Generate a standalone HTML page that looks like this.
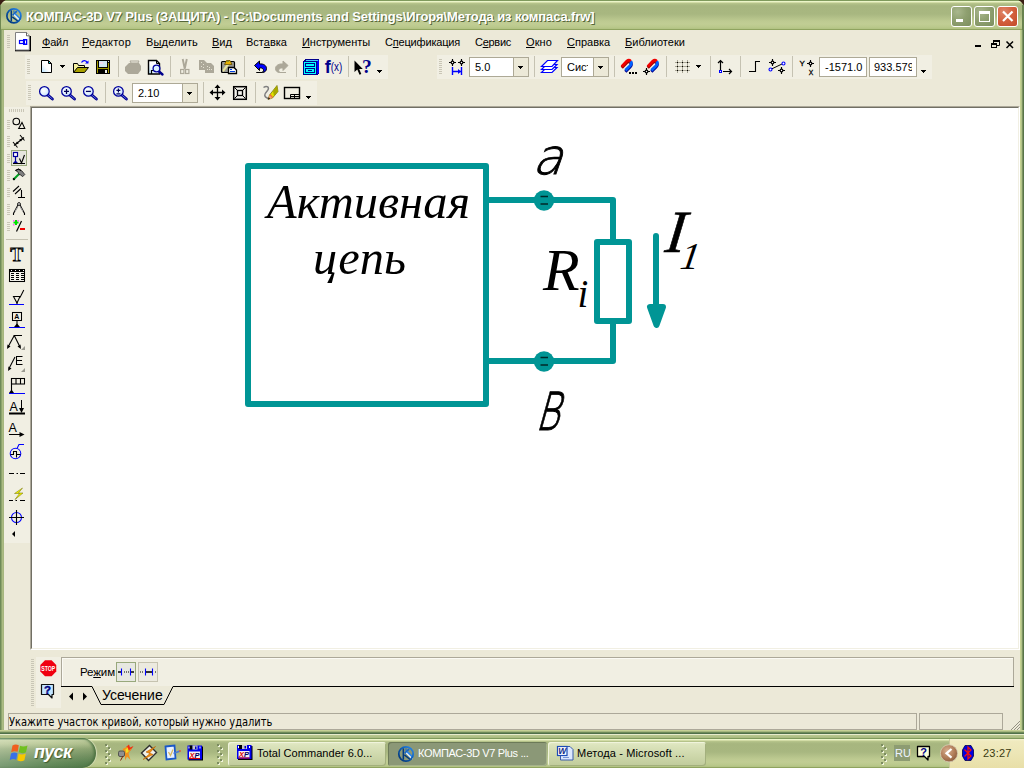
<!DOCTYPE html>
<html lang="ru">
<head>
<meta charset="utf-8">
<title>КОМПАС-3D V7 Plus</title>
<style>
*{box-sizing:border-box;margin:0;padding:0}
html,body{width:1024px;height:768px;overflow:hidden;background:#ECE9D8}
body{position:relative;font-family:"Liberation Sans",sans-serif;font-size:11px;color:#000}
.a{position:absolute}
.t{position:absolute;white-space:nowrap;line-height:1}
.band{position:absolute;background:#F1EFE3}
.grip{position:absolute;width:3px;background:repeating-linear-gradient(to bottom,#C9C6B6 0,#C9C6B6 1px,transparent 1px,transparent 2px)}
.menu u{text-decoration:underline;text-underline-offset:1px}
svg{position:absolute;overflow:visible}
.combo{position:absolute;height:20px;background:#fff;border:1px solid #ADA996;overflow:hidden}
.combo b{position:absolute;right:0;top:0;bottom:0;width:15px;background:#ECE9D8;border-left:1px solid #ADA996}
.combo span{position:absolute;left:5px;top:4px;white-space:nowrap;line-height:1;font-size:11px}
.tb{position:absolute;top:742px;height:24px;border-radius:3px;font-size:11px}
.tb span{position:absolute;top:6px;white-space:nowrap;line-height:1}
</style>
</head>
<body>
<div id="titlebar" class="a" style="left:0;top:0;width:1024px;height:30px;background:linear-gradient(to bottom,#7F9A5C 0,#7F9A5C 1px,#EBF5C8 1px,#EBF5C8 2px,#D2DCA6 2px,#D2DCA6 3px,#B9C68D 3px,#AAB982 5px,#A7B67F 6px,#A8B780 14px,#BDCA91 21px,#C1CD94 24px,#BAC98C 27px,#B3C384 28.5px,#8FA35F 29.2px,#8FA35F 30px)"></div>
<div class="a" style="left:0;top:30px;width:4px;height:704px;background:linear-gradient(to right,#6F8A58 0,#6F8A58 1px,#8DA46D 1px,#8DA46D 2px,#ABBB83 2px,#ABBB83 3px,#A6B67F 3px,#A6B67F 4px)"></div>
<div class="a" style="left:1020px;top:30px;width:4px;height:704px;background:linear-gradient(to right,#C5D392 0,#C5D392 1px,#B4C38A 1px,#B4C38A 2px,#7C9460 2px,#7C9460 3px,#58744A 3px,#58744A 4px)"></div>
<div class="a" style="left:0;top:730px;width:1024px;height:4px;background:linear-gradient(to bottom,#C5D095 0,#C5D095 1px,#A5B67E 1px,#A5B67E 2px,#6E8A58 2px,#6E8A58 3px,#50704A 3px,#50704A 4px)"></div>
<svg class="a" style="left:0;top:0" width="1024" height="6" viewBox="0 0 1024 6"><path d="M0 0H5.6Q2 1.8 0 5.6Z" fill="#3A1E14"/><path d="M1024 0H1018.4Q1022 1.8 1024 5.6Z" fill="#3A1E14"/></svg>
<div class="a" style="left:0;top:5px;width:1px;height:25px;background:#708852"></div><div class="a" style="left:1022px;top:5px;width:2px;height:25px;background:#68824F"></div>
<div id="ttl" class="t" style="left:26px;top:10px;font-size:13px;font-weight:bold;color:#fff;text-shadow:1px 1px 0 #55663A;letter-spacing:-0.11px">КОМПАС-3D V7 Plus (ЗАЩИТА) - [C:\Documents and Settings\Игоря\Метода из компаса.frw]</div>
<div class="a" style="left:951px;top:6px;width:21px;height:21px;border:1px solid #fff;border-radius:3px;background:radial-gradient(circle at 30% 25%,#A9B78D 0,#8FA070 45%,#7C8E5E 100%)"></div><div class="a" style="left:974px;top:6px;width:21px;height:21px;border:1px solid #fff;border-radius:3px;background:radial-gradient(circle at 30% 25%,#A9B78D 0,#8FA070 45%,#7C8E5E 100%)"></div><div class="a" style="left:997px;top:6px;width:21px;height:21px;border:1px solid #fff;border-radius:3px;background:radial-gradient(circle at 30% 25%,#E0866A 0,#D4623F 45%,#C24A28 100%)"></div>
<div class="grip" style="left:7px;top:35px;height:13px"></div>
<div class="menu">
<span class="t" style="left:42px;top:37px;letter-spacing:-0.25px"><u>Ф</u>айл</span>
<span class="t" style="left:82px;top:37px;letter-spacing:0.2px"><u>Р</u>едактор</span>
<span class="t" style="left:146px;top:37px;letter-spacing:0.15px">В<u>ы</u>делить</span>
<span class="t" style="left:212px;top:37px"><u>В</u>ид</span>
<span class="t" style="left:246px;top:37px">Вст<u>а</u>вка</span>
<span class="t" style="left:302px;top:37px;letter-spacing:-0.05px"><u>И</u>нструменты</span>
<span class="t" style="left:385px;top:37px;letter-spacing:-0.18px">С<u>п</u>ецификация</span>
<span class="t" style="left:475px;top:37px;letter-spacing:-0.28px">С<u>е</u>рвис</span>
<span class="t" style="left:526px;top:37px;letter-spacing:0.1px"><u>О</u>кно</span>
<span class="t" style="left:567px;top:37px"><u>С</u>правка</span>
<span class="t" style="left:625px;top:37px;letter-spacing:0.04px"><u>Б</u>иблиотеки</span>
</div>
<div class="band" style="left:25px;top:55px;width:363px;height:24px"></div>
<div class="band" style="left:437px;top:55px;width:495px;height:24px"></div>
<div class="band" style="left:26px;top:81px;width:291px;height:24px"></div>
<div class="grip" style="left:27px;top:59px;height:15px"></div>
<div class="grip" style="left:439px;top:59px;height:15px"></div>
<div class="grip" style="left:28px;top:85px;height:15px"></div>
<div class="combo" style="left:469px;top:57px;width:60px"><span>5.0</span><b></b></div>
<div class="combo" style="left:561px;top:57px;width:48px"><span style="width:21px;overflow:hidden">Сист</span><b></b></div>
<div class="combo" style="left:819px;top:57px;width:48px"><span>-1571.0</span></div>
<div class="combo" style="left:869px;top:57px;width:48px"><span style="left:4px;width:38px;overflow:hidden">933.5795</span></div>
<div class="combo" style="left:132px;top:83px;width:66px"><span>2.10</span><b></b></div>
<div class="band" style="left:4px;top:107px;width:26px;height:436px"></div>
<div id="canvas" class="a" style="left:30px;top:106px;width:990px;height:544px;background:#fff;border-top:1px solid #ACA899;border-left:1px solid #ACA899;border-right:1px solid #fff;border-bottom:1px solid #fff"><div class="a" style="left:0;top:0;width:988px;height:542px;border-top:1px solid #716F64;border-left:1px solid #716F64;border-right:1px solid #F1EFE3;border-bottom:1px solid #F1EFE3"></div></div>
<svg id="drawing" class="a" style="left:0;top:0" width="1024" height="768" viewBox="0 0 1024 768">
<g fill="none" stroke="#009595" stroke-width="6" stroke-linejoin="round" stroke-linecap="butt">
<rect x="248" y="166" width="238" height="238"/>
<path d="M489 200H613V242"/>
<path d="M489 361H613V321"/>
<rect x="597" y="242" width="32" height="79"/>
<path d="M656 236V306" stroke-linecap="round"/>
<path d="M650 307H663L656.5 325Z" fill="#009595"/>
</g>
<circle cx="544" cy="200.5" r="10.2" fill="#009595"/>
<circle cx="544" cy="361.5" r="10.2" fill="#009595"/>
<g stroke="#002828" stroke-width="1.6">
<path d="M540.5 196.5H548M540.5 204H548M540.5 357.5H548M540.5 365H548"/>
</g>
<g font-family="'Liberation Serif',serif" font-style="italic" fill="#000">
<text x="267" y="218" font-size="48" textLength="203" lengthAdjust="spacingAndGlyphs">Активная</text>
<text x="313" y="274" font-size="48" textLength="93" lengthAdjust="spacingAndGlyphs">цепь</text>
<text x="543" y="289.5" font-size="60">R</text>
<text x="577.5" y="307.3" font-size="39">i</text>
<text transform="translate(664 252) skewX(-7)" font-size="60" stroke="#000" stroke-width="0.6">I</text>
<text transform="translate(679 269) skewX(-9)" font-size="38">1</text>
</g>
<g font-family="'DejaVu Sans Light','DejaVu Sans',sans-serif" font-weight="200" font-style="italic" fill="#000" stroke="#000" stroke-width="0.9">
<text transform="translate(531.8 173.5) skewX(-6) scale(0.99 1)" font-size="49">a</text>
<text transform="translate(534.5 430) skewX(-7) scale(0.62 1)" font-size="70">в</text>
</g>
</svg>
<div class="band" style="left:36px;top:657px;width:984px;height:51px"></div>
<div class="a" style="left:61px;top:708px;width:959px;height:0"></div>
<div class="a" style="left:61px;top:686px;width:959px;height:22px;background:#ECE9D8"></div>
<div class="a" style="left:1014px;top:657px;width:6px;height:51px;background:#ECE9D8"></div>
<div class="a" style="left:61px;top:657px;width:953px;height:30px;border:1px solid #ACA899;border-bottom:none;box-shadow:inset 1px 1px 0 #FBFAF4"></div>
<div class="t" style="left:80px;top:667px;font-size:11.5px;letter-spacing:-0.1px">Ре<u style="text-underline-offset:1px">ж</u>им</div>
<div class="t" style="left:102px;top:688px;font-size:14px;letter-spacing:0">Усечение</div>
<div class="a" style="left:8px;top:713px;width:909px;height:17px;border:1px solid #ACA899;border-right-color:#ACA899;border-bottom-color:#ACA899"></div>
<div class="a" style="left:919px;top:713px;width:84px;height:17px;border:1px solid #ACA899"></div>
<div class="t" style="left:9px;top:716px;font-family:'DejaVu Sans Condensed','Liberation Sans',sans-serif;font-size:11px;transform:scale(1,1.1);transform-origin:0 0">Укажите участок кривой, который нужно удалить</div>
<div class="a" style="left:0;top:734px;width:1024px;height:4px;background:linear-gradient(to bottom,#E6EBCB 0,#E6EBCB 1px,#B9C88F 1px,#B0C086 3px,#A6B87C 4px)"></div>
<div id="taskbar" class="a" style="left:0;top:738px;width:1024px;height:30px;background:linear-gradient(to bottom,#7F9A5C 0,#7F9A5C 1px,#EBF5C8 1px,#EBF5C8 2px,#D2DCA6 2px,#D2DCA6 3px,#B9C68D 3px,#AAB982 5px,#A7B67F 6px,#A8B780 14px,#BDCA91 21px,#C1CD94 24px,#BAC98C 27px,#B3C384 28.5px,#8FA35F 29.2px,#8FA35F 30px)"></div>
<div id="start" class="a" style="left:0;top:738px;width:96px;height:30px;border-radius:0 14px 14px 0/0 15px 15px 0;background:linear-gradient(to right,rgba(255,255,255,0.22) 0,rgba(255,255,255,0.05) 55%,rgba(0,40,0,0.08) 100%),linear-gradient(to bottom,#4E7A46 0,#6A9160 1px,#C6D3A3 2px,#B7C693 6px,#94AB78 11px,#789665 18px,#5E8654 25px,#527A4A 30px);box-shadow:inset -3px 0 3px -1px #4A7040, 1px 0 1px #D5DDB8"></div>
<div class="t" style="left:34px;top:743px;font-size:18px;font-weight:bold;font-style:italic;color:#fff;text-shadow:1px 1px 1px #3C5A30;letter-spacing:-0.7px">пуск</div>
<div class="tb" style="left:228px;width:158px;background:linear-gradient(to bottom,#E4EBC8 0,#DCE4BD 3px,#CDD7AA 14px,#C0CB9B 24px);box-shadow:inset 1px 1px 0 #F0F4DC,inset -1px -1px 0 #A3B07D;color:#000"><span style="left:29px;letter-spacing:0.05px">Total Commander 6.0...</span></div>
<div class="tb" style="left:388px;width:159px;background:#8B9877;box-shadow:inset 1px 1px 0 #6C7A58,inset -1px -1px 0 #A5B28B;color:#fff"><span style="left:30px;letter-spacing:-0.35px">КОМПАС-3D V7 Plus ...</span></div>
<div class="tb" style="left:548px;width:158px;background:linear-gradient(to bottom,#E4EBC8 0,#DCE4BD 3px,#CDD7AA 14px,#C0CB9B 24px);box-shadow:inset 1px 1px 0 #F0F4DC,inset -1px -1px 0 #A3B07D;color:#000"><span style="left:29px;letter-spacing:0.12px">Метода - Microsoft ...</span></div>
<div class="a" style="left:949px;top:739px;width:75px;height:29px;background:linear-gradient(to bottom,#F7F3D3 0,#F0EABF 2px,#EDE6B6 14px,#E8DFA8 29px);border-left:1px solid #C9C89A"></div>
<div class="a" style="left:894px;top:745px;width:16px;height:16px;background:#8D9C72"></div>
<div class="t" style="left:895px;top:748px;font-size:11px;color:#EEF3FF">RU</div>
<div class="t" style="left:983px;top:748px;font-size:11px;color:#3A3A10;letter-spacing:0.2px">23:27</div>
<svg class="a" style="left:0;top:0" width="1024" height="60" viewBox="0 0 1024 60"><rect x="975" y="45" width="6" height="2" fill="#000"/><path d="M993.5 43V40.5H999.5V45.5H997" fill="none" stroke="#000" stroke-width="1"/><rect x="993" y="40" width="7" height="2" fill="#000"/><rect x="991.5" y="43.5" width="5" height="4" fill="none" stroke="#000" stroke-width="1"/><rect x="991" y="43" width="6" height="2" fill="#000"/><path d="M1006.5 41.5L1013 48M1013 41.5L1006.5 48" stroke="#000" stroke-width="1.5"/><rect x="956" y="19" width="7" height="3" fill="#fff"/><rect x="979.5" y="11.5" width="10" height="10" fill="none" stroke="#fff" stroke-width="1"/><rect x="979" y="11" width="11" height="3" fill="#fff"/><path d="M1003 11.5L1012.5 21M1012.5 11.5L1003 21" stroke="#fff" stroke-width="2.2"/><rect x="29" y="36" width="2" height="15" fill="#000"/><rect x="15" y="50" width="16" height="1.3" fill="#000"/><path d="M15.5 32.5H26.5L29.3 35.8V50H15.5Z" fill="#fff" stroke="#808080" stroke-width="1"/><path d="M26.5 32.5V35.8H29.3" fill="#fff" stroke="#404040" stroke-width="0.8"/><rect x="19.5" y="40.5" width="4" height="3" fill="#fff" stroke="#0000FF" stroke-width="1.2"/><rect x="23" y="39" width="4.3" height="6" fill="#0000FF"/><rect x="25" y="40.5" width="1" height="3" fill="#fff"/></svg>
<svg id="icons" class="a" style="left:0;top:0" width="1024" height="768" viewBox="0 0 1024 768">
<defs><radialGradient id="lens" cx="0.4" cy="0.4" r="0.7"><stop offset="0" stop-color="#FFFFFF"/><stop offset="0.5" stop-color="#E4F2FF"/><stop offset="1" stop-color="#B4D6FF"/></radialGradient><linearGradient id="doc" x1="1" y1="0" x2="0" y2="1"><stop offset="0" stop-color="#fff"/><stop offset="0.55" stop-color="#fff"/><stop offset="1" stop-color="#B5E2FF"/></linearGradient><linearGradient id="fold" x1="0" y1="0" x2="0" y2="1"><stop offset="0" stop-color="#FFFFE0"/><stop offset="1" stop-color="#E8E070"/></linearGradient></defs>
<path d="M41.5 60.5H48.5L51.5 63.5V72.5H41.5Z" fill="url(#doc)" stroke="#000"/><path d="M48.5 60.5V63.5H51.5" fill="none" stroke="#000"/><rect x="49" y="62" width="1" height="1" fill="#00D8E8"/>
<path fill="#000" d="M60 65h5v1h-1v1h-1v1h-1v-1h-1v-1h-1z"/>
<path d="M73.5 72.5V63.5H77.5L78.5 65.5H84.5V67.5" fill="#F5F0A0" stroke="#000"/><path d="M73.5 72.5L77.5 67.5H88.5L84.5 72.5Z" fill="#A8A000" stroke="#000"/><path d="M81.5 62.5C83 60 86 60 87.5 63" fill="none" stroke="#0000FF" stroke-width="1.2"/><path d="M85 63.5H88.5V60.5Z" fill="#0000FF"/>
<rect x="96" y="60" width="14" height="14" fill="#000"/><rect x="97" y="61" width="1" height="12" fill="#A09800"/><rect x="108" y="63" width="1" height="10" fill="#A09800"/><rect x="98" y="68" width="10" height="1" fill="#A09800"/><rect x="99" y="61" width="8" height="6" fill="#CFE4F4"/><rect x="100" y="62" width="3" height="2" fill="#F0D8F0"/><rect x="105" y="70" width="2" height="3" fill="#F0F0F0"/><rect x="108" y="61" width="1" height="1" fill="#ddd"/>
<rect x="118" y="56" width="1" height="21" fill="#C5C2B2"/>
<path d="M130 61H139L138 63H131Z" fill="none" stroke="#ACA899"/><path d="M129 63H139L141 66V70L138 74H128L125 71V67Z" fill="#ACA899"/>
<path d="M148.5 60.5H156.5L159.5 63.5V74H148.5Z" fill="url(#doc)" stroke="#000" stroke-width="1.4"/><path d="M156.5 60.5V63.5H159.5" fill="none" stroke="#000"/><path d="M151.5 74V70.5H156" fill="none" stroke="#000" stroke-width="1.2"/><path d="M159 71.5L162.5 74.5" stroke="#00008C" stroke-width="2.4" stroke-linecap="round"/><circle cx="156.5" cy="68.5" r="3.4" fill="#D8F0FF" fill-opacity="0.85" stroke="#00009C" stroke-width="1.3"/>
<rect x="170" y="56" width="1" height="21" fill="#C5C2B2"/>
<path d="M182.7 59L184.8 69M186.8 59L184.7 69" fill="none" stroke="#ACA899" stroke-width="1.9"/><rect x="180.6" y="69.5" width="3.3" height="4" fill="none" stroke="#ACA899" stroke-width="1.2"/><rect x="185.6" y="69.5" width="3.3" height="4" fill="none" stroke="#ACA899" stroke-width="1.2"/>
<path d="M199 60H204L207 63V70H199Z" fill="#ACA899"/><path d="M205 63H211L214 66V73H205Z" fill="#ACA899"/><path d="M201 62h1v1h-1zM203 64h1v1h-1zM201 66h1v1h-1zM203 67h1v1h-1zM207 66h1v1h-1zM209 67h1v1h-1zM207 69h1v1h-1zM209 69h1v1h-1zM211 69h1v1h-1z" fill="#E4E1D2"/>
<rect x="221.5" y="61.5" width="13" height="11" rx="1" fill="#9A9A94" stroke="#000" stroke-width="1.2"/><path d="M222.5 70L228 62.5H231L223.5 72Z" fill="#E8E49A"/><path d="M224.5 64.5L226.5 60.5H230L232 64.5Z" fill="#E8B000" stroke="#6A5000" stroke-width="0.8"/><rect x="227" y="61" width="2" height="1" fill="#8A9A30"/><path d="M228.5 67.5H234L236.5 70V73.5H228.5Z" fill="#fff" stroke="#000" stroke-width="1.3"/><rect x="230" y="69" width="2" height="1" fill="#0040E0"/><rect x="230" y="71" width="5" height="1" fill="#0040E0"/>
<rect x="244" y="56" width="1" height="21" fill="#C5C2B2"/>
<path d="M254.5 65.5L259.5 61V64C263.5 63.5 266.5 65.5 266.5 68.5C266.5 71 264.5 72.5 262.5 72.5H256.5H261.5C263.5 72 264 70.5 263.2 69.2C262.5 68 261 67.8 259.5 68V70.5Z" fill="#0000FF" stroke="#000" stroke-width="1" stroke-linejoin="round"/>
<path d="M288 65.5L283 61V64C279 63.5 275.5 65.5 275.5 68.5C275.5 71 277.5 72.5 279.5 72.5H286H280.5C278.5 72 278.2 70.5 279 69.2C279.8 68 281.5 67.8 283 68V70.5Z" fill="#ACA899" stroke="#ACA899" stroke-width="1" stroke-linejoin="round"/>
<rect x="296" y="56" width="1" height="21" fill="#C5C2B2"/>
<g shape-rendering="crispEdges"><path d="M303 61L306 59H319V73L317 75H303Z" fill="#00008C"/><path d="M305 61L307 60H318L317 61Z" fill="#40D0FF"/><rect x="317" y="61" width="1" height="13" fill="#0000FF"/><rect x="318" y="60" width="0.6" height="13" fill="#0000FF"/><rect x="304" y="62" width="12" height="12" fill="#00FFFF"/><rect x="305" y="63" width="10" height="4" fill="#00008C"/><rect x="306" y="64" width="8" height="2" fill="#00FFFF"/><rect x="305" y="68" width="10" height="5" fill="#00008C"/><rect x="306" y="69" width="8" height="3" fill="#00FFFF"/><rect x="308" y="70" width="4" height="1" fill="#00008C"/></g>
<text x="324.8" y="72.6" font-family="'Liberation Sans',sans-serif" font-size="17.5" font-weight="bold" fill="#00008C" textLength="6" lengthAdjust="spacingAndGlyphs">f</text><text x="330.8" y="71" font-family="'Liberation Sans',sans-serif" font-size="13" fill="#00008C" textLength="11.5" lengthAdjust="spacingAndGlyphs">(x)</text>
<rect x="348" y="56" width="1" height="21" fill="#C5C2B2"/>
<path d="M354.5 60.5V72L357.3 69.5L359.5 74.8L361.3 74L359.2 69H362.8Z" fill="#000"/><text x="362" y="73" font-family="'Liberation Serif',serif" font-size="19.5" font-weight="bold" fill="#00008C">?</text>
<path fill="#000" d="M377 70h5v1h-1v1h-1v1h-1v-1h-1v-1h-1z"/>
<path stroke="#000" stroke-width="1.15" fill="none" d="M449.0 62.5H451.0M454.0 62.5H456.0M452.5 59.0V61.0M452.5 64.0V66.0"/><circle cx="452.5" cy="62.5" r="1.35" fill="#fff" stroke="#000" stroke-width="1.25"/><path stroke="#000" stroke-width="1.15" fill="none" d="M458.0 62.5H460.0M463.0 62.5H465.0M461.5 59.0V61.0M461.5 64.0V66.0"/><circle cx="461.5" cy="62.5" r="1.35" fill="#fff" stroke="#000" stroke-width="1.25"/>
<path d="M452.5 67V75M461.5 67V75M453 71.5H461" stroke="#0000FF" stroke-width="1.4" fill="none"/><path d="M458 69L461 71.5L458 74Z" fill="#0000FF"/>
<rect x="534" y="56" width="1" height="21" fill="#C5C2B2"/>
<g fill="#fff" stroke="#0000FF" stroke-width="1.2"><path d="M541.5 72.5L546.5 67.5H557L552 72.5Z"/><path d="M541.5 69.5L546.5 64.5H557L552 69.5Z"/><path d="M541.5 66.5L547.5 60.5H557.5L552 66.5Z"/></g>
<rect x="614" y="56" width="1" height="21" fill="#C5C2B2"/>
<g transform="translate(61.7 6.3) scale(0.9)" fill="none" stroke-linecap="butt"><path d="M622.3 68.3L628 62.3Q630.2 60.5 632.3 62.5" stroke="#A00000" stroke-width="3.4"/><path d="M632.3 62.5Q633.8 65 631.5 67.5L626.3 72.7" stroke="#00008C" stroke-width="3.4"/><path d="M622.3 66.8L628 60.8Q630.2 59 632.3 61" stroke="#F00000" stroke-width="3.2"/><path d="M632.3 61Q633.8 63.5 631.5 66L626.3 71.2" stroke="#0060FF" stroke-width="3.2"/></g>
<path d="M629 72h2v2h-2zM632 72h2v2h-2zM635 72h2v2h-2z" fill="#000"/>
<g transform="translate(87.7 6.3) scale(0.9)" fill="none" stroke-linecap="butt"><path d="M622.3 68.3L628 62.3Q630.2 60.5 632.3 62.5" stroke="#A00000" stroke-width="3.4"/><path d="M632.3 62.5Q633.8 65 631.5 67.5L626.3 72.7" stroke="#00008C" stroke-width="3.4"/><path d="M622.3 66.8L628 60.8Q630.2 59 632.3 61" stroke="#F00000" stroke-width="3.2"/><path d="M632.3 61Q633.8 63.5 631.5 66L626.3 71.2" stroke="#0060FF" stroke-width="3.2"/></g>
<path stroke="#000" stroke-width="1.15" fill="none" d="M643.0 71.5H645.0M648.0 71.5H650.0M646.5 68.0V70.0M646.5 73.0V75.0"/><circle cx="646.5" cy="71.5" r="1.35" fill="#fff" stroke="#000" stroke-width="1.25"/>
<rect x="666" y="56" width="1" height="21" fill="#C5C2B2"/>
<path d="M675 62.5H690M675 66.5H690M675 70.5H690M677.5 60V73M682.5 60V73M687.5 60V73" stroke="#A8A594" stroke-width="1"/><path d="M677 62h1v1h-1zM682 62h1v1h-1zM687 62h1v1h-1zM677 66h1v1h-1zM682 66h1v1h-1zM687 66h1v1h-1zM677 70h1v1h-1zM682 70h1v1h-1zM687 70h1v1h-1z" fill="#000"/>
<path fill="#000" d="M696 65h5v1h-1v1h-1v1h-1v-1h-1v-1h-1z"/>
<rect x="710" y="56" width="1" height="21" fill="#C5C2B2"/>
<path d="M720.5 60.5V70M718 63L720.5 60.5L723 63M723 71.5H731M729 69L731.5 71.5L729 74" fill="none" stroke="#000" stroke-width="1.2"/><rect x="719.5" y="70.5" width="2" height="2" fill="#fff" stroke="#0000FF" stroke-width="1"/>
<rect x="740" y="56" width="1" height="21" fill="#C5C2B2"/>
<path d="M749 71.5H755.5V61.5H760" fill="none" stroke="#000" stroke-width="1.1"/>
<path stroke="#000" stroke-width="1.15" fill="none" d="M769.0 62.5H771.0M774.0 62.5H776.0M772.5 59.0V61.0M772.5 64.0V66.0"/><circle cx="772.5" cy="62.5" r="1.35" fill="#fff" stroke="#000" stroke-width="1.25"/><path stroke="#000" stroke-width="1.15" fill="none" d="M778.0 70.5H780.0M783.0 70.5H785.0M781.5 67.0V69.0M781.5 72.0V74.0"/><circle cx="781.5" cy="70.5" r="1.35" fill="#fff" stroke="#000" stroke-width="1.25"/>
<path d="M771.5 69L782 64" stroke="#000" stroke-width="1"/><circle cx="770.5" cy="69.5" r="1.5" fill="#fff" stroke="#0000FF" stroke-width="1.1"/><circle cx="783.5" cy="63.5" r="1.5" fill="#fff" stroke="#0000FF" stroke-width="1.1"/>
<rect x="792" y="56" width="1" height="21" fill="#C5C2B2"/>
<text x="799.5" y="66" font-family="'Liberation Sans',sans-serif" font-size="8" fill="#000" stroke="#000" stroke-width="0.3">Y</text><text x="808.8" y="74.5" font-family="'Liberation Sans',sans-serif" font-size="7.5" fill="#000" stroke="#000" stroke-width="0.3" textLength="4.5" lengthAdjust="spacingAndGlyphs">X</text>
<path stroke="#000" stroke-width="1.15" fill="none" d="M807.0 63.5H809.0M812.0 63.5H814.0M810.5 60.0V62.0M810.5 65.0V67.0"/><circle cx="810.5" cy="63.5" r="1.35" fill="#fff" stroke="#000" stroke-width="1.25"/>
<path fill="#000" d="M921 70h5v1h-1v1h-1v1h-1v-1h-1v-1h-1z"/><path fill="#000" d="M518 66h5v1h-1v1h-1v1h-1v-1h-1v-1h-1z"/><path fill="#000" d="M598 66h5v1h-1v1h-1v1h-1v-1h-1v-1h-1z"/><path fill="#000" d="M187 92h5v1h-1v1h-1v1h-1v-1h-1v-1h-1z"/>
<path d="M47.6 94.80000000000001L52.4 99.0" stroke="#00008C" stroke-width="2.9" stroke-linecap="round"/><path d="M48.0 95.2L52.199999999999996 98.80000000000001" stroke="#5A6AE8" stroke-width="1" stroke-linecap="round"/><circle cx="44.4" cy="91.4" r="4.8" fill="url(#lens)" stroke="#00009C" stroke-width="1.25"/><path d="M69.7 94.80000000000001L74.5 99.0" stroke="#00008C" stroke-width="2.9" stroke-linecap="round"/><path d="M70.1 95.2L74.3 98.80000000000001" stroke="#5A6AE8" stroke-width="1" stroke-linecap="round"/><circle cx="66.5" cy="91.4" r="4.8" fill="url(#lens)" stroke="#00009C" stroke-width="1.25"/><path d="M64.0 91.4h5M66.5 88.9v5" stroke="#00005A" stroke-width="1.3"/><path d="M91.60000000000001 94.80000000000001L96.4 99.0" stroke="#00008C" stroke-width="2.9" stroke-linecap="round"/><path d="M92.0 95.2L96.2 98.80000000000001" stroke="#5A6AE8" stroke-width="1" stroke-linecap="round"/><circle cx="88.4" cy="91.4" r="4.8" fill="url(#lens)" stroke="#00009C" stroke-width="1.25"/><path d="M85.9 91.4h5" stroke="#00005A" stroke-width="1.3"/>
<rect x="105" y="82" width="1" height="21" fill="#C5C2B2"/>
<path d="M121.60000000000001 94.80000000000001L126.4 99.0" stroke="#00008C" stroke-width="2.9" stroke-linecap="round"/><path d="M122.0 95.2L126.2 98.80000000000001" stroke="#5A6AE8" stroke-width="1" stroke-linecap="round"/><circle cx="118.4" cy="91.4" r="4.8" fill="url(#lens)" stroke="#00009C" stroke-width="1.25"/><path d="M116.4 90.4h4M118.4 88.4v4M116.4 93.9h4" stroke="#00005A" stroke-width="1.2"/>
<rect x="203" y="82" width="1" height="21" fill="#C5C2B2"/>
<path d="M211 92.5H224M217.5 86V99" stroke="#000" stroke-width="1.3"/><path d="M217.5 84.5L220.5 88H214.5ZM217.5 100.5L220.5 97H214.5ZM209.5 92.5L213 89.5V95.5ZM225.5 92.5L222 89.5V95.5Z" fill="#000"/>
<rect x="233.7" y="86.7" width="12.6" height="12.6" fill="#F4F3EC" stroke="#000" stroke-width="1.5"/><path d="M234.5 87.5L237.5 90.5M245.5 87.5L242.5 90.5M234.5 98.5L237.5 95.5M245.5 98.5L242.5 95.5" stroke="#000" stroke-width="1"/><rect x="237.5" y="90.5" width="5" height="5" fill="none" stroke="#000" stroke-width="1.3"/>
<rect x="255" y="82" width="1" height="21" fill="#C5C2B2"/>
<path d="M263.5 87.5C267 85 270 87.5 267.5 90.5C264 94.5 263.5 96.5 268 98.5" fill="none" stroke="#808080" stroke-width="1.5"/><path d="M277 85.5L278 91.5L272.5 98L268 99.5L269.5 95Z" fill="#E0E000" stroke="#505000" stroke-width="0.6"/><path d="M277 85.5L278 91.5L274 96L273 91Z" fill="#A8A800"/><path d="M269.5 95L268 99.5L272.5 98Z" fill="#F0A070"/><path d="M268 99.5L268.8 97.2L270 98.7Z" fill="#000"/><path d="M270 94.5L272.5 97.5" stroke="#F07040" stroke-width="1.3"/>
<rect x="284.5" y="87.5" width="15" height="11" fill="none" stroke="#000" stroke-width="1.4"/><path d="M290.5 98V94.5H299M290.5 96.5H299M294.5 94.5V98" fill="none" stroke="#000" stroke-width="1"/>
<path fill="#000" d="M306 96h5v1h-1v1h-1v1h-1v-1h-1v-1h-1z"/>
<rect x="9" y="109" width="1" height="3" fill="#C9C6B6"/><rect x="11" y="109" width="1" height="3" fill="#C9C6B6"/><rect x="13" y="109" width="1" height="3" fill="#C9C6B6"/><rect x="15" y="109" width="1" height="3" fill="#C9C6B6"/><rect x="17" y="109" width="1" height="3" fill="#C9C6B6"/><rect x="19" y="109" width="1" height="3" fill="#C9C6B6"/><rect x="21" y="109" width="1" height="3" fill="#C9C6B6"/><rect x="23" y="109" width="1" height="3" fill="#C9C6B6"/>
<rect x="7" y="120" width="3" height="1" fill="#C9C6B6"/><rect x="7" y="122" width="3" height="1" fill="#C9C6B6"/><rect x="7" y="124" width="3" height="1" fill="#C9C6B6"/><rect x="7" y="126" width="3" height="1" fill="#C9C6B6"/><rect x="7" y="128" width="3" height="1" fill="#C9C6B6"/>
<circle cx="16.3" cy="121.5" r="3.3" fill="none" stroke="#000" stroke-width="1.1"/><path d="M22 122.5L24.8 128.5H18.7Z" fill="none" stroke="#000" stroke-width="1.05"/>
<rect x="7" y="136" width="3" height="1" fill="#C9C6B6"/><rect x="7" y="138" width="3" height="1" fill="#C9C6B6"/><rect x="7" y="140" width="3" height="1" fill="#C9C6B6"/><rect x="7" y="142" width="3" height="1" fill="#C9C6B6"/><rect x="7" y="144" width="3" height="1" fill="#C9C6B6"/><rect x="7" y="146" width="3" height="1" fill="#C9C6B6"/>
<path d="M14 145.5L24 137.5" stroke="#000" stroke-width="1.05"/><path d="M13 142L17.5 147.5M20 135L24.5 140.5" stroke="#000" stroke-width="1.05"/><path d="M15 144.7L18.8 143.6L17 141.4ZM23 138.3L19.2 139.4L21 141.6Z" fill="#000"/>
<rect x="11.5" y="150.5" width="15" height="15" fill="#E6E6DE" stroke="#98A87C"/>
<rect x="7" y="154" width="3" height="1" fill="#C9C6B6"/><rect x="7" y="156" width="3" height="1" fill="#C9C6B6"/><rect x="7" y="158" width="3" height="1" fill="#C9C6B6"/><rect x="7" y="160" width="3" height="1" fill="#C9C6B6"/><rect x="7" y="162" width="3" height="1" fill="#C9C6B6"/>
<rect x="13.5" y="152.5" width="4" height="4" fill="#fff" stroke="#00009C" stroke-width="1.2"/><path d="M15.5 157V162" stroke="#00009C" stroke-width="1.2"/><path d="M13 163L15.5 160.5L18 163Z" fill="#00009C"/><path d="M13 163.5H25" stroke="#000" stroke-width="1.05"/><path d="M19.5 158.5L21.5 163L24.5 155" fill="none" stroke="#000" stroke-width="1.1"/>
<rect x="7" y="170" width="3" height="1" fill="#C9C6B6"/><rect x="7" y="172" width="3" height="1" fill="#C9C6B6"/><rect x="7" y="174" width="3" height="1" fill="#C9C6B6"/><rect x="7" y="176" width="3" height="1" fill="#C9C6B6"/><rect x="7" y="178" width="3" height="1" fill="#C9C6B6"/><rect x="7" y="180" width="3" height="1" fill="#C9C6B6"/>
<path d="M13.5 179.5L19.5 173.5" stroke="#00A020" stroke-width="2"/><path d="M13.2 179.8L14.5 178.5" stroke="#000" stroke-width="2"/><path d="M15.5 170.5L18.5 169L22 171L24.8 174.5L22.5 176.8L21 175L19 174.5L18 172Z" fill="#808080" stroke="#202020" stroke-width="0.8"/><path d="M15.5 170.5L18.5 169L21 170.5" fill="none" stroke="#000" stroke-width="1.05"/>
<rect x="7" y="188" width="3" height="1" fill="#C9C6B6"/><rect x="7" y="190" width="3" height="1" fill="#C9C6B6"/><rect x="7" y="192" width="3" height="1" fill="#C9C6B6"/><rect x="7" y="194" width="3" height="1" fill="#C9C6B6"/><rect x="7" y="196" width="3" height="1" fill="#C9C6B6"/>
<path d="M13 191.5L19 186M15 194L21 188.5" stroke="#000" stroke-width="1.05"/><path d="M21.5 190V197.5M18 197.5H25" stroke="#000" stroke-width="1.1"/>
<rect x="7" y="204" width="3" height="1" fill="#C9C6B6"/><rect x="7" y="206" width="3" height="1" fill="#C9C6B6"/><rect x="7" y="208" width="3" height="1" fill="#C9C6B6"/><rect x="7" y="210" width="3" height="1" fill="#C9C6B6"/><rect x="7" y="212" width="3" height="1" fill="#C9C6B6"/><rect x="7" y="214" width="3" height="1" fill="#C9C6B6"/>
<path d="M18.5 204L13.5 213.5V215M19.5 204L24.5 213.5V215" fill="none" stroke="#000" stroke-width="1.1"/><path d="M18 206.5L15 211.5M20 206.5L23 211.5" stroke="#9A9A9A" stroke-width="1.05"/><circle cx="19" cy="204" r="1.4" fill="#fff" stroke="#000" stroke-width="0.9"/>
<rect x="7" y="222" width="3" height="1" fill="#C9C6B6"/><rect x="7" y="224" width="3" height="1" fill="#C9C6B6"/><rect x="7" y="226" width="3" height="1" fill="#C9C6B6"/><rect x="7" y="228" width="3" height="1" fill="#C9C6B6"/><rect x="7" y="230" width="3" height="1" fill="#C9C6B6"/>
<path d="M13.5 222.5H18.5M16 220V225" stroke="#00E000" stroke-width="2"/><rect x="13" y="220" width="1.5" height="1.5" fill="#FF60FF"/><rect x="17.5" y="220" width="1.5" height="1.5" fill="#FF60FF"/><rect x="13" y="224" width="1.5" height="1.5" fill="#FF60FF"/><path d="M21.5 221L16.5 231.5" stroke="#000" stroke-width="1.2"/><rect x="20" y="228" width="5" height="2" fill="#F00000"/>
<rect x="6" y="239" width="22" height="1" fill="#C5C2B2"/>
<text x="10.3" y="261" font-family="'Liberation Serif',serif" font-size="19.5" font-weight="bold" fill="#fff" stroke="#000" stroke-width="0.9" textLength="13" lengthAdjust="spacingAndGlyphs">T</text>
<rect x="9.5" y="269.5" width="15" height="12" fill="#F4F3EC" stroke="#000" stroke-width="1.05"/><rect x="9" y="269" width="16" height="3" fill="#000"/><path d="M11 270h1v1h-1zM15 270h1v1h-1zM19 270h1v1h-1zM23 270h1v1h-1z" fill="#fff"/><path d="M11 273.5H14M16 273.5H19M21 273.5H24M11 275.5H14M16 275.5H19M21 275.5H24M11 277.5H14M16 277.5H19M21 277.5H24M11 279.5H14M16 279.5H19M21 279.5H24" stroke="#000" stroke-width="1"/>
<path d="M13.5 296.5H20L17 303Z" fill="none" stroke="#000" stroke-width="1.05"/><path d="M20 297.5L23.8 290" stroke="#000" stroke-width="1.05"/><path d="M16 303.5L17 301.5L18 303.5Z" fill="#000"/><rect x="9" y="304" width="15" height="1" fill="#0000FF"/>
<rect x="12.5" y="312.5" width="9" height="8" fill="none" stroke="#000" stroke-width="1.05"/><text x="14.3" y="319.3" font-family="'Liberation Sans',sans-serif" font-size="7" font-weight="bold" fill="#000">A</text><path d="M17 321V325" stroke="#000" stroke-width="1.05"/><path d="M14 327L17 323.5L20 327Z" fill="#000"/><rect x="9" y="327" width="16" height="1" fill="#0000FF"/>
<path d="M13.5 335.5H22" stroke="#000" stroke-width="1.05"/><path d="M14 336L8 347M14.5 336L20 347" stroke="#000" stroke-width="1.1"/><path d="M7 349L7.5 344.5L10.5 346.5ZM21 349L17.5 346.5L20.5 344.5Z" fill="#000"/><path d="M25 346V350H21Z" fill="#9A9A90"/>
<path d="M15 357L9 368.5" stroke="#000" stroke-width="1.05"/><path d="M8 371L8.5 366.5L11.5 368.5Z" fill="#000"/><path d="M22.5 356.5H16.5V364.5H22.5M16.5 360.5H22" fill="none" stroke="#000" stroke-width="1.05"/><path d="M25 368V372H21Z" fill="#9A9A90"/>
<path d="M11.5 378V392" stroke="#000" stroke-width="1.1"/><rect x="11.5" y="378.5" width="13" height="5.5" fill="none" stroke="#000" stroke-width="1.05"/><path d="M16 378.5V384M20.5 378.5V384" stroke="#000" stroke-width="1.1"/><path d="M9 393L11.5 389.5L14 393Z" fill="#000"/><rect x="9" y="393" width="16" height="1" fill="#0000FF"/>
<text x="9.5" y="411" font-family="'Liberation Sans',sans-serif" font-size="12.5" fill="#000">A</text><path d="M21.5 400V412" stroke="#000" stroke-width="1.05"/><path d="M19 408L21.5 413L24 408Z" fill="#000"/><rect x="9" y="412.5" width="16" height="2" fill="#000"/>
<text x="8.5" y="432" font-family="'Liberation Sans',sans-serif" font-size="12.5" fill="#000">A</text><path d="M9 434.5H22" stroke="#000" stroke-width="1.05"/><path d="M19.5 432L24.5 434.5L19.5 437Z" fill="#000"/>
<circle cx="15.5" cy="453.5" r="5.3" fill="none" stroke="#0000FF" stroke-width="1.05"/><path d="M17 448.5L19 444.5H24" fill="none" stroke="#0000FF" stroke-width="1.1"/><path d="M10.5 454.5H13.5V451.5H16.5V457.5M16.5 454.5H20.5" fill="none" stroke="#000" stroke-width="1.05"/>
<path d="M9 473.5H14M16.5 473.5H18M20 473.5H25" stroke="#000" stroke-width="1.2"/>
<path d="M22.5 488L14.5 493.5H19.5L15 499.5L23 493H18.5Z" fill="#F0F000" stroke="#707000" stroke-width="0.5"/><path d="M9 500.5H13M15.5 500.5H17M20 500.5H25" stroke="#000" stroke-width="1.1"/>
<circle cx="16.5" cy="517.5" r="5" fill="none" stroke="#0000FF" stroke-width="1.05"/><path d="M9 517.5H24M16.5 510V525" stroke="#000" stroke-width="1.1"/>
<path d="M12 534L15 531V537Z" fill="#000"/>
<rect x="31" y="659" width="3" height="1" fill="#C9C6B6"/><rect x="31" y="661" width="3" height="1" fill="#C9C6B6"/><rect x="31" y="663" width="3" height="1" fill="#C9C6B6"/><rect x="31" y="665" width="3" height="1" fill="#C9C6B6"/><rect x="31" y="667" width="3" height="1" fill="#C9C6B6"/><rect x="31" y="669" width="3" height="1" fill="#C9C6B6"/><rect x="31" y="671" width="3" height="1" fill="#C9C6B6"/><rect x="31" y="673" width="3" height="1" fill="#C9C6B6"/><rect x="31" y="675" width="3" height="1" fill="#C9C6B6"/><rect x="31" y="677" width="3" height="1" fill="#C9C6B6"/><rect x="31" y="679" width="3" height="1" fill="#C9C6B6"/><rect x="31" y="681" width="3" height="1" fill="#C9C6B6"/><rect x="31" y="683" width="3" height="1" fill="#C9C6B6"/><rect x="31" y="685" width="3" height="1" fill="#C9C6B6"/><rect x="31" y="687" width="3" height="1" fill="#C9C6B6"/><rect x="31" y="689" width="3" height="1" fill="#C9C6B6"/><rect x="31" y="691" width="3" height="1" fill="#C9C6B6"/><rect x="31" y="693" width="3" height="1" fill="#C9C6B6"/><rect x="31" y="695" width="3" height="1" fill="#C9C6B6"/><rect x="31" y="697" width="3" height="1" fill="#C9C6B6"/><rect x="31" y="699" width="3" height="1" fill="#C9C6B6"/><rect x="31" y="701" width="3" height="1" fill="#C9C6B6"/><rect x="31" y="703" width="3" height="1" fill="#C9C6B6"/><rect x="31" y="705" width="3" height="1" fill="#C9C6B6"/>
<polygon points="56.25,671.59 51.59,676.25 45.01,676.25 40.35,671.59 40.35,665.01 45.01,660.35 51.59,660.35 56.25,665.01" fill="#F00010"/>
<text x="41.3" y="670.6" font-family="'Liberation Sans',sans-serif" font-size="6.5" font-weight="bold" fill="#fff" textLength="14" lengthAdjust="spacingAndGlyphs">STOP</text>
<path d="M41.5 684.5H53.5V694.5H52V698L48.5 694.5H41.5Z" fill="#C4E6FF" stroke="#101010" stroke-width="1.2" stroke-linejoin="round"/><text x="44" y="693.5" font-family="'Liberation Sans',sans-serif" font-size="11.5" font-weight="bold" fill="#000080" stroke="#000080" stroke-width="0.4">?</text>
<rect x="116.5" y="662.5" width="19" height="19" fill="#E7E8E1" stroke="#98A87C"/><rect x="138.5" y="662.5" width="19" height="19" fill="#ECEADF" stroke="#C6C3B0"/>
<path d="M118 672H121M131 672H134" stroke="#000" stroke-width="1.6"/><path d="M121.5 668.5V675.5M130.5 668.5V675.5" stroke="#0000FF" stroke-width="1.1"/><path d="M124 671.5h1v1h-1zM126 671.5h1v1h-1zM128 671.5h1v1h-1z" fill="#000"/>
<path d="M146 672H152" stroke="#000" stroke-width="1.6"/><path d="M145.5 668.5V675.5M152.5 668.5V675.5" stroke="#0000FF" stroke-width="1.1"/><path d="M140 671.5h1v1h-1zM142 671.5h1v1h-1zM155 671.5h1v1h-1zM157 671.5h0v1h0z" fill="#000"/>
<path d="M61 686.5H92L101 704.5H164L173 686.5H1014" fill="none" stroke="#000" stroke-width="1"/>
<path d="M69 696.5L73 692.5V700.5ZM87 696.5L83 692.5V700.5Z" fill="#000"/>
<path d="M1011 730L1020 721M1014 730L1020 724M1017 730L1020 727" stroke="#8A8778" stroke-width="0.9" fill="none"/>
<defs><linearGradient id="kring" x1="0" y1="1" x2="1" y2="0"><stop offset="0" stop-color="#00306E"/><stop offset="0.5" stop-color="#0A58B0"/><stop offset="1" stop-color="#2C8CF0"/></linearGradient><radialGradient id="brn" cx="0.4" cy="0.35" r="0.7"><stop offset="0" stop-color="#D8B090"/><stop offset="0.6" stop-color="#B07C58"/><stop offset="1" stop-color="#8A5A3C"/></radialGradient></defs>
<g transform="translate(13.9 15.9) scale(1)"><path d="M-2.6 -5.6V5.6" stroke="#003A80" stroke-width="1.5"/><path d="M-1.3 -0.5L2.9 -4.8" stroke="#1565C8" stroke-width="1.7"/><path d="M0 -3.2V-5.5" stroke="#1565C8" stroke-width="1"/><path d="M0.9 -1.7L6.4 3.5" stroke="#2A86E8" stroke-width="2.4"/><path d="M0.2 -1.1L6.3 4.8" stroke="#F2F7FF" stroke-width="1.2"/><path d="M-1.6 0.9L4.4 5.6" stroke="#003A80" stroke-width="1.5"/><circle r="7" fill="none" stroke="url(#kring)" stroke-width="1.7"/></g>
<g transform="translate(10 744)"><path d="M2.5 1.5Q5.5 -0.5 8.8 1.2L7.6 7.8Q4.5 6.3 1.2 8.2Z" fill="#F06020"/><path d="M10 1.8Q13.5 3.5 17.5 1.5L16 8.2Q12.5 10 8.8 8.3Z" fill="#70C020"/><path d="M1 9.5Q4.2 7.6 7.4 9.2L6.2 15.8Q3 14.2 -0.3 16.2Z" fill="#3A70E8"/><path d="M8.6 9.8Q12 11.5 15.8 9.6L14.4 16.3Q10.8 18 7.3 16.3Z" fill="#F8C800"/></g>
<rect x="106" y="745" width="2" height="2" fill="#F0F4DC"/><rect x="105" y="744" width="2" height="2" fill="#7C8C60"/><rect x="106" y="751" width="2" height="2" fill="#F0F4DC"/><rect x="105" y="750" width="2" height="2" fill="#7C8C60"/><rect x="106" y="757" width="2" height="2" fill="#F0F4DC"/><rect x="105" y="756" width="2" height="2" fill="#7C8C60"/><rect x="106" y="763" width="2" height="2" fill="#F0F4DC"/><rect x="105" y="762" width="2" height="2" fill="#7C8C60"/><rect x="109" y="748" width="2" height="2" fill="#F0F4DC"/><rect x="108" y="747" width="2" height="2" fill="#7C8C60"/><rect x="109" y="754" width="2" height="2" fill="#F0F4DC"/><rect x="108" y="753" width="2" height="2" fill="#7C8C60"/><rect x="109" y="760" width="2" height="2" fill="#F0F4DC"/><rect x="108" y="759" width="2" height="2" fill="#7C8C60"/>
<rect x="218" y="745" width="2" height="2" fill="#F0F4DC"/><rect x="217" y="744" width="2" height="2" fill="#7C8C60"/><rect x="218" y="751" width="2" height="2" fill="#F0F4DC"/><rect x="217" y="750" width="2" height="2" fill="#7C8C60"/><rect x="218" y="757" width="2" height="2" fill="#F0F4DC"/><rect x="217" y="756" width="2" height="2" fill="#7C8C60"/><rect x="218" y="763" width="2" height="2" fill="#F0F4DC"/><rect x="217" y="762" width="2" height="2" fill="#7C8C60"/><rect x="221" y="748" width="2" height="2" fill="#F0F4DC"/><rect x="220" y="747" width="2" height="2" fill="#7C8C60"/><rect x="221" y="754" width="2" height="2" fill="#F0F4DC"/><rect x="220" y="753" width="2" height="2" fill="#7C8C60"/><rect x="221" y="760" width="2" height="2" fill="#F0F4DC"/><rect x="220" y="759" width="2" height="2" fill="#7C8C60"/>
<rect x="882" y="745" width="2" height="2" fill="#F0F4DC"/><rect x="881" y="744" width="2" height="2" fill="#7C8C60"/><rect x="882" y="751" width="2" height="2" fill="#F0F4DC"/><rect x="881" y="750" width="2" height="2" fill="#7C8C60"/><rect x="882" y="757" width="2" height="2" fill="#F0F4DC"/><rect x="881" y="756" width="2" height="2" fill="#7C8C60"/><rect x="882" y="763" width="2" height="2" fill="#F0F4DC"/><rect x="881" y="762" width="2" height="2" fill="#7C8C60"/><rect x="885" y="748" width="2" height="2" fill="#F0F4DC"/><rect x="884" y="747" width="2" height="2" fill="#7C8C60"/><rect x="885" y="754" width="2" height="2" fill="#F0F4DC"/><rect x="884" y="753" width="2" height="2" fill="#7C8C60"/><rect x="885" y="760" width="2" height="2" fill="#F0F4DC"/><rect x="884" y="759" width="2" height="2" fill="#7C8C60"/>
<path d="M126 747L129 744.5L130 747.5L133.5 746L130.5 750.5L128 750Z" fill="#F03010"/><path d="M122.5 749L127.5 746.5L128.5 750.5L132 748L128.5 753.5L130.5 760L127 756.5L125 760.5L125 753Z" fill="#F09020"/><path d="M125.5 749L128 748L128.5 752L126 753Z" fill="#F0E020"/><rect x="118.5" y="751" width="6" height="5.5" rx="1.5" fill="#909090" stroke="#404040" stroke-width="0.8"/><path d="M123 756L120.5 760.5" stroke="#802010" stroke-width="1"/>
<path d="M141.5 753L149.5 745.5L156.5 752.5L148.5 760.5Z" fill="#F0F0E8" stroke="#303030" stroke-width="1.4"/><path d="M155.5 746.5L146 752L150 753.5L143 759.5L153 754.5L149.5 753Z" fill="#F09010" stroke="#C06000" stroke-width="0.6"/>
<path d="M165.5 746.5L174.5 745.5L175.5 758.5L166.5 759.5Z" fill="#E8F0FF" stroke="#1A58C8" stroke-width="1.8"/><path d="M168.5 752L170.5 755.5L173 749.5" fill="none" stroke="#D8B860" stroke-width="1.3"/><path d="M173.5 753.5L180 751" stroke="#4A78D0" stroke-width="1.6"/><circle cx="180" cy="751" r="1" fill="#E06040"/>
<g transform="translate(187.5 745.5)"><rect x="1" y="1" width="14.5" height="14" fill="#000"/><rect x="0" y="0" width="14.5" height="14" fill="#0000F0"/><rect x="2" y="0" width="3" height="4" fill="#000"/><rect x="5" y="0" width="5" height="4" fill="#C8C8C8"/><rect x="7.5" y="1" width="1.5" height="2.5" fill="#0000C0"/><rect x="1" y="1" width="1" height="2" fill="#fff"/><rect x="12" y="1" width="1" height="2" fill="#fff"/><rect x="1.5" y="6" width="11" height="6.5" fill="#F0F0F0"/><rect x="1.5" y="12.5" width="11" height="1" fill="#E00000"/><text x="2" y="12" font-family="'Liberation Sans',sans-serif" font-size="7.5" font-weight="bold" font-style="italic" fill="#E00000">X</text><text x="7" y="12" font-family="'Liberation Sans',sans-serif" font-size="7.5" font-weight="bold" font-style="italic" fill="#000060">P</text></g>
<g transform="translate(237 745)"><rect x="1" y="1" width="14.5" height="14" fill="#000"/><rect x="0" y="0" width="14.5" height="14" fill="#0000F0"/><rect x="2" y="0" width="3" height="4" fill="#000"/><rect x="5" y="0" width="5" height="4" fill="#C8C8C8"/><rect x="7.5" y="1" width="1.5" height="2.5" fill="#0000C0"/><rect x="1" y="1" width="1" height="2" fill="#fff"/><rect x="12" y="1" width="1" height="2" fill="#fff"/><rect x="1.5" y="6" width="11" height="6.5" fill="#F0F0F0"/><rect x="1.5" y="12.5" width="11" height="1" fill="#E00000"/><text x="2" y="12" font-family="'Liberation Sans',sans-serif" font-size="7.5" font-weight="bold" font-style="italic" fill="#E00000">X</text><text x="7" y="12" font-family="'Liberation Sans',sans-serif" font-size="7.5" font-weight="bold" font-style="italic" fill="#000060">P</text></g>
<g transform="translate(406 754) scale(1.029)"><path d="M-2.6 -5.6V5.6" stroke="#003A80" stroke-width="1.5"/><path d="M-1.3 -0.5L2.9 -4.8" stroke="#1565C8" stroke-width="1.7"/><path d="M0 -3.2V-5.5" stroke="#1565C8" stroke-width="1"/><path d="M0.9 -1.7L6.4 3.5" stroke="#2A86E8" stroke-width="2.4"/><path d="M0.2 -1.1L6.3 4.8" stroke="#F2F7FF" stroke-width="1.2"/><path d="M-1.6 0.9L4.4 5.6" stroke="#003A80" stroke-width="1.5"/><circle r="7" fill="none" stroke="url(#kring)" stroke-width="1.7"/></g>
<path d="M560.5 746.5H570L573 749.5V760H560.5Z" fill="#DCE8FF" stroke="#3A5CA8" stroke-width="1"/><path d="M563 757.5H569" stroke="#7A98D8" stroke-width="1"/><rect x="557.5" y="746.5" width="9.5" height="9" fill="#fff" stroke="#1C4CB8" stroke-width="1.2"/><text x="558.3" y="754.3" font-family="'Liberation Sans',sans-serif" font-size="9" font-weight="bold" font-style="italic" fill="#102A88" textLength="8" lengthAdjust="spacingAndGlyphs">W</text>
<path d="M917.5 746.5H929.5V756.5H928V760L924.5 756.5H917.5Z" fill="#FFFFD8" stroke="#000" stroke-width="1.3" stroke-linejoin="round"/><text x="920.3" y="755.8" font-family="'Liberation Sans',sans-serif" font-size="11" font-weight="bold" fill="#00008C">?</text>
<circle cx="949" cy="753.3" r="8.6" fill="url(#brn)" stroke="#D8D0B8" stroke-width="0.8"/><path d="M951.5 749L946.5 753.3L951.5 757.6" fill="none" stroke="#fff" stroke-width="2.2"/>
<path d="M962.5 750L965 745.5H971L973.5 750V756L971 760.5H965L962.5 756Z" fill="#0000E0" stroke="#000050" stroke-width="0.8"/><path d="M964.5 749.5L971 756L968 759V747L971 750L964.5 756.5" fill="none" stroke="#F01010" stroke-width="1.3"/>
</svg>
</body>
</html>
